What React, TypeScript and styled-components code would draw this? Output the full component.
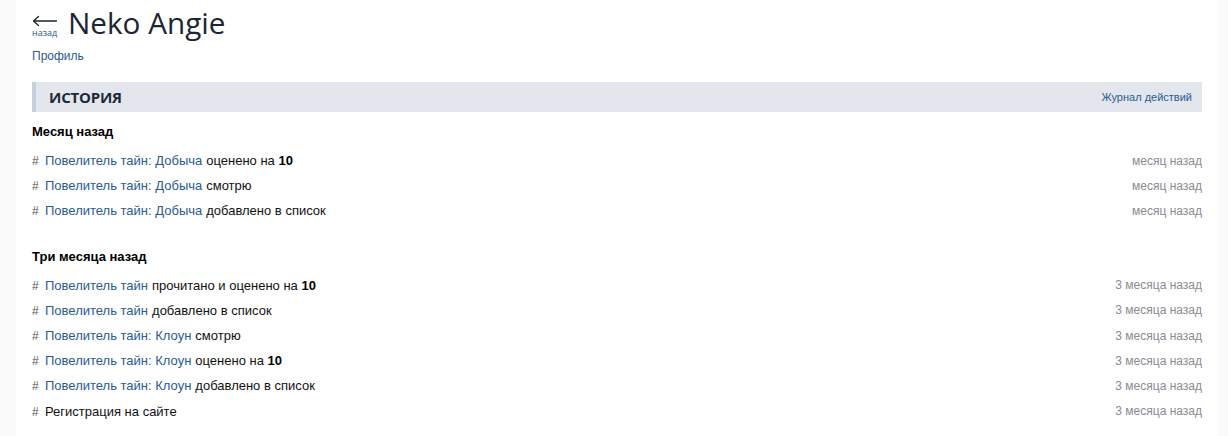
import React from "react";
import styled, { createGlobalStyle } from "styled-components";

const Global = createGlobalStyle`
  html, body { margin: 0; padding: 0; background: #ffffff; }
  body { font-family: "Liberation Sans", Arial, sans-serif; color: #111; }
  a { text-decoration: none; }
`;

const Shell = styled.div`
  display: grid;
  grid-template-columns: 16px 1fr 11px;
  min-height: 436px;
`;

const SideStrip = styled.div`
  background: #fbfbfc;
`;

const Main = styled.main`
  padding: 3px 15px 0 16px;
`;

const TitleRow = styled.div`
  display: flex;
  align-items: flex-start;
  gap: 11px;
  height: 40px;
`;

const Back = styled.a`
  display: flex;
  flex-direction: column;
  align-items: flex-start;
  padding-top: 12px;
  width: 25px;
`;

const ArrowIcon = styled.svg`
  display: block;
  width: 25px;
  height: 12px;
`;

const BackLabel = styled.span`
  font-family: "Open Sans", sans-serif;
  font-size: 9px;
  line-height: 10px;
  color: #255896;
  margin-top: 1px;
`;

const Title = styled.h1`
  margin: 0;
  font-family: "Open Sans", sans-serif;
  font-weight: 400;
  font-size: 29.7px;
  line-height: 40px;
  color: #1c2535;
`;

const ProfileLink = styled.a`
  display: block;
  font-family: "Liberation Sans", Arial, sans-serif;
  font-size: 12px;
  line-height: 18px;
  color: #2a5b93;
  margin: 4px 0 17px;
`;

const SectionHeader = styled.div`
  display: flex;
  align-items: center;
  justify-content: space-between;
  height: 30px;
  background: #e3e7ed;
  border-left: 4px solid #c8d0db;
  padding: 0 10px 0 13px;
`;

const SectionTitle = styled.h2`
  margin: 0;
  font-family: "Open Sans", sans-serif;
  font-weight: 700;
  font-size: 15px;
  letter-spacing: -0.2px;
  text-transform: uppercase;
  color: #1d2838;
`;

const SectionLink = styled.a`
  font-size: 11px;
  color: #2a5b93;
`;

const Group = styled.section<{ $first?: boolean }>`
  margin-top: ${(p) => (p.$first ? "10px" : "23px")};
`;

const GroupTitle = styled.h3`
  margin: 0 0 6px;
  font-size: 13px;
  font-weight: 700;
  line-height: 20px;
  color: #000;
`;

const Row = styled.div`
  display: flex;
  align-items: center;
  justify-content: space-between;
  height: 25.2px;
  font-size: 13px;
`;

const Entry = styled.div`
  display: flex;
  align-items: baseline;
`;

const Hash = styled.span`
  color: #555;
  width: 13px;
  font-size: 12px;
`;

const ItemLink = styled.a`
  color: #2a5b93;
  margin-right: 4px;
`;

const Action = styled.span`
  color: #111;
  b { font-weight: 700; color: #000; }
`;

const When = styled.span`
  font-size: 12px;
  color: #888c92;
`;

type Item = { link?: string; action: string; score?: string; when: string };

const groups: { title: string; items: Item[] }[] = [
  {
    title: "Месяц назад",
    items: [
      { link: "Повелитель тайн: Добыча", action: "оценено на", score: "10", when: "месяц назад" },
      { link: "Повелитель тайн: Добыча", action: "смотрю", when: "месяц назад" },
      { link: "Повелитель тайн: Добыча", action: "добавлено в список", when: "месяц назад" },
    ],
  },
  {
    title: "Три месяца назад",
    items: [
      { link: "Повелитель тайн", action: "прочитано и оценено на", score: "10", when: "3 месяца назад" },
      { link: "Повелитель тайн", action: "добавлено в список", when: "3 месяца назад" },
      { link: "Повелитель тайн: Клоун", action: "смотрю", when: "3 месяца назад" },
      { link: "Повелитель тайн: Клоун", action: "оценено на", score: "10", when: "3 месяца назад" },
      { link: "Повелитель тайн: Клоун", action: "добавлено в список", when: "3 месяца назад" },
      { action: "Регистрация на сайте", when: "3 месяца назад" },
    ],
  },
];

export default function App() {
  return (
    <>
      <Global />
      <Shell>
        <SideStrip />
        <Main>
          <TitleRow>
            <Back href="#">
              <ArrowIcon viewBox="0 0 25 12" aria-hidden="true">
                <path
                  d="M24.5 6H1.5M1.5 6L6.5 1.5M1.5 6L6.5 10.5"
                  fill="none"
                  stroke="#1c2535"
                  strokeWidth="1.3"
                  strokeLinecap="round"
                />
              </ArrowIcon>
              <BackLabel>назад</BackLabel>
            </Back>
            <Title>Neko Angie</Title>
          </TitleRow>
          <ProfileLink href="#">Профиль</ProfileLink>
          <SectionHeader>
            <SectionTitle>История</SectionTitle>
            <SectionLink href="#">Журнал действий</SectionLink>
          </SectionHeader>
          {groups.map((g, gi) => (
            <Group key={g.title} $first={gi === 0}>
              <GroupTitle>{g.title}</GroupTitle>
              {g.items.map((it, i) => (
                <Row key={i}>
                  <Entry>
                    <Hash>#</Hash>
                    {it.link && <ItemLink href="#">{it.link}</ItemLink>}
                    <Action>
                      {it.action}
                      {it.score && (
                        <>
                          {" "}
                          <b>{it.score}</b>
                        </>
                      )}
                    </Action>
                  </Entry>
                  <When>{it.when}</When>
                </Row>
              ))}
            </Group>
          ))}
        </Main>
        <SideStrip />
      </Shell>
    </>
  );
}
